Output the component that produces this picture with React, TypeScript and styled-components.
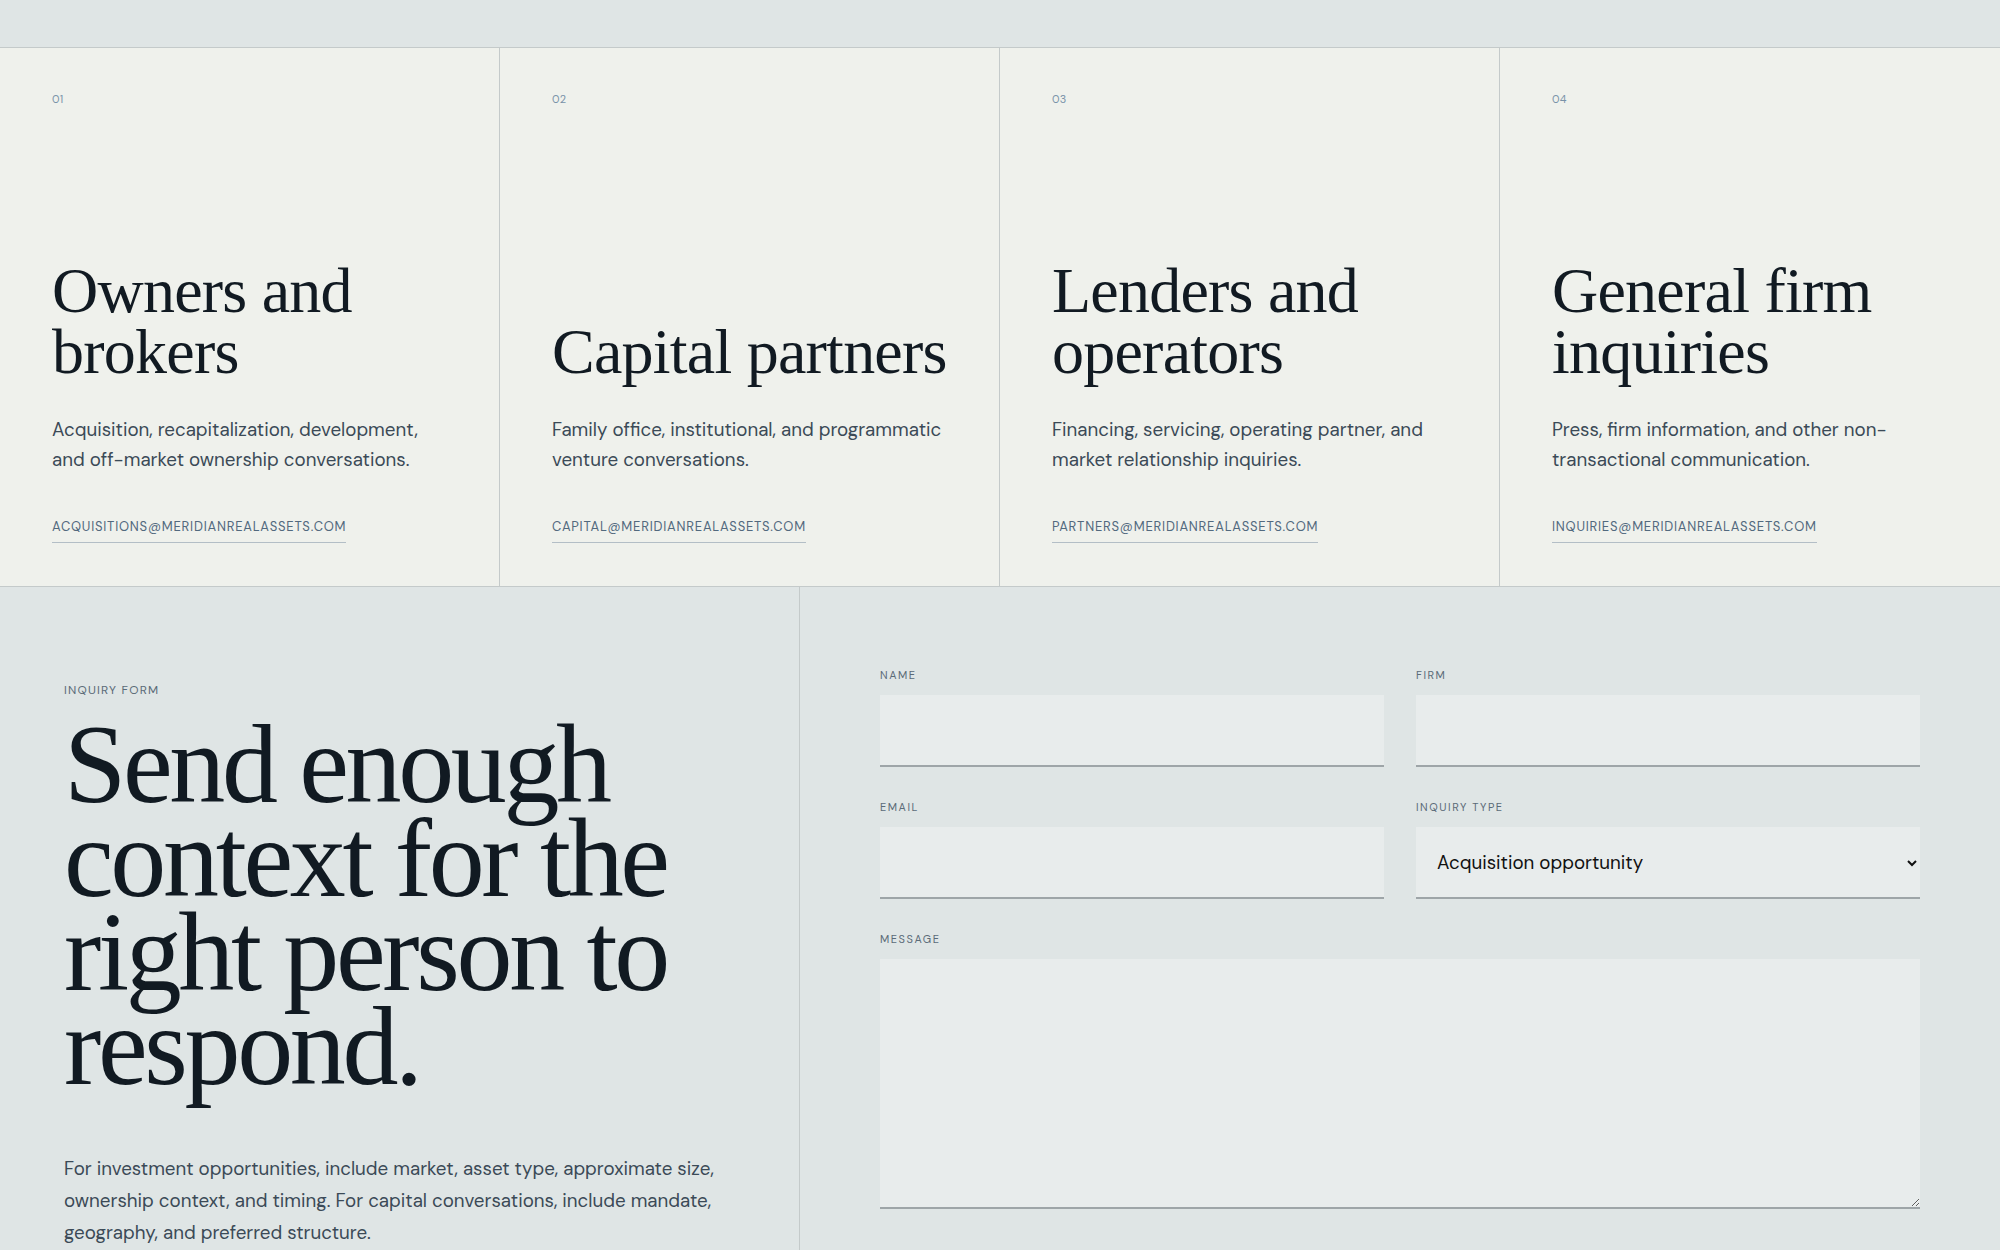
import styled, { createGlobalStyle } from 'styled-components'

const GlobalStyle = createGlobalStyle`
    * { box-sizing: border-box; }
    body {
        margin: 0;
        background: #dfe5e5;
        font-family: "DM Sans", Roboto, "Noto Sans", sans-serif;
        color: #111a22;
    }
`

const Page = styled.div`
    display: flex;
    flex-direction: column;
    min-height: 1250px;
`

const TopBand = styled.div`
    height: 48px;
    background: #dfe5e5;
    border-bottom: 1px solid #c4caca;
`

const CardRow = styled.section`
    display: grid;
    grid-template-columns: repeat(4, 1fr);
    background: #eff1ec;
    border-bottom: 1px solid #c4caca;
`

const Card = styled.article<{ $last?: boolean }>`
    display: flex;
    flex-direction: column;
    min-height: 538px;
    padding: 44px 40px 43px 52px;
    border-right: ${p => (p.$last ? 'none' : '1px solid #c4caca')};
`

const CardNumber = styled.span`
    font-size: 11px;
    line-height: 14px;
    color: #7892a8;
    letter-spacing: 0.02em;
`

const CardBody = styled.div`
    margin-top: auto;
    display: flex;
    flex-direction: column;
    align-items: flex-start;
`

const CardTitle = styled.h3`
    margin: 0 0 33px;
    font-family: "Liberation Serif", "DejaVu Serif", serif;
    font-weight: 400;
    font-size: 64px;
    line-height: 61px;
    letter-spacing: -0.012em;
    color: #111a22;
`

const CardText = styled.p`
    margin: 0 0 43px;
    max-width: 396px;
    font-size: 18.75px;
    line-height: 30.6px;
    color: #3b4a57;
`

const EmailLink = styled.a`
    display: inline-block;
    padding-bottom: 7px;
    border-bottom: 1px solid #b3bec6;
    font-size: 13px;
    line-height: 16px;
    letter-spacing: 0.06em;
    text-transform: uppercase;
    text-decoration: none;
    color: #52697e;
`

const InquirySection = styled.section`
    flex: 1;
    display: grid;
    grid-template-columns: 800px 1fr;
`

const Intro = styled.div`
    padding: 95px 64px 40px;
    border-right: 1px solid #c4caca;
`

const Eyebrow = styled.div`
    font-size: 12px;
    line-height: 16px;
    letter-spacing: 0.1em;
    text-transform: uppercase;
    color: #5b6b78;
    margin-bottom: 19px;
`

const Headline = styled.h2`
    margin: 0 0 60px;
    font-family: "Liberation Serif", "DejaVu Serif", serif;
    font-weight: 400;
    font-size: 112px;
    line-height: 94px;
    letter-spacing: -0.03em;
    color: #111a22;
`

const IntroText = styled.p`
    margin: 0;
    font-size: 18.75px;
    line-height: 32px;
    color: #3b4a57;
`

const Form = styled.form`
    padding: 80px;
    display: grid;
    grid-template-columns: 1fr 1fr;
    column-gap: 32px;
    row-gap: 32px;
    align-content: start;
`

const Field = styled.label<{ $wide?: boolean }>`
    display: flex;
    flex-direction: column;
    gap: 12px;
    grid-column: ${p => (p.$wide ? '1 / -1' : 'auto')};
`

const FieldLabel = styled.span`
    font-size: 11px;
    line-height: 16px;
    letter-spacing: 0.14em;
    text-transform: uppercase;
    color: #5b6b78;
`

const fieldBase = `
    width: 100%;
    background: #e8ecec;
    border: none;
    border-bottom: 2px solid #9ea5a8;
    border-radius: 0;
    font-family: inherit;
    font-size: 18.75px;
    color: #111;
    outline: none;
`

const Input = styled.input`
    ${fieldBase}
    height: 72px;
    padding: 0 20px;
`

const Select = styled.select`
    ${fieldBase}
    height: 72px;
    padding: 0 6px 0 17px;
`

const TextArea = styled.textarea`
    ${fieldBase}
    height: 250px;
    padding: 20px;
    resize: vertical;
`

const cards = [
    {
        n: '01',
        title: 'Owners and brokers',
        text: 'Acquisition, recapitalization, development, and off-market ownership conversations.',
        email: 'acquisitions@meridianrealassets.com',
    },
    {
        n: '02',
        title: 'Capital partners',
        text: 'Family office, institutional, and programmatic venture conversations.',
        email: 'capital@meridianrealassets.com',
    },
    {
        n: '03',
        title: 'Lenders and operators',
        text: 'Financing, servicing, operating partner, and market relationship inquiries.',
        email: 'partners@meridianrealassets.com',
    },
    {
        n: '04',
        title: 'General firm inquiries',
        text: 'Press, firm information, and other non-transactional communication.',
        email: 'inquiries@meridianrealassets.com',
    },
]

const App = () => {
    return (
        <Page>
            <GlobalStyle />
            <TopBand />
            <CardRow>
                {cards.map((c, i) => (
                    <Card key={c.n} $last={i === cards.length - 1}>
                        <CardNumber>{c.n}</CardNumber>
                        <CardBody>
                            <CardTitle>{c.title}</CardTitle>
                            <CardText>{c.text}</CardText>
                            <EmailLink href={`mailto:${c.email}`}>{c.email}</EmailLink>
                        </CardBody>
                    </Card>
                ))}
            </CardRow>
            <InquirySection>
                <Intro>
                    <Eyebrow>Inquiry form</Eyebrow>
                    <Headline>Send enough context for the right person to respond.</Headline>
                    <IntroText>
                        For investment opportunities, include market, asset type, approximate size,
                        ownership context, and timing. For capital conversations, include mandate,
                        geography, and preferred structure.
                    </IntroText>
                </Intro>
                <Form onSubmit={e => e.preventDefault()}>
                    <Field>
                        <FieldLabel>Name</FieldLabel>
                        <Input type="text" name="name" />
                    </Field>
                    <Field>
                        <FieldLabel>Firm</FieldLabel>
                        <Input type="text" name="firm" />
                    </Field>
                    <Field>
                        <FieldLabel>Email</FieldLabel>
                        <Input type="email" name="email" />
                    </Field>
                    <Field>
                        <FieldLabel>Inquiry type</FieldLabel>
                        <Select name="type" defaultValue="acquisition">
                            <option value="acquisition">Acquisition opportunity</option>
                            <option value="capital">Capital partnership</option>
                            <option value="lending">Lending or operating</option>
                            <option value="general">General inquiry</option>
                        </Select>
                    </Field>
                    <Field $wide>
                        <FieldLabel>Message</FieldLabel>
                        <TextArea name="message" />
                    </Field>
                </Form>
            </InquirySection>
        </Page>
    )
}

export default App
